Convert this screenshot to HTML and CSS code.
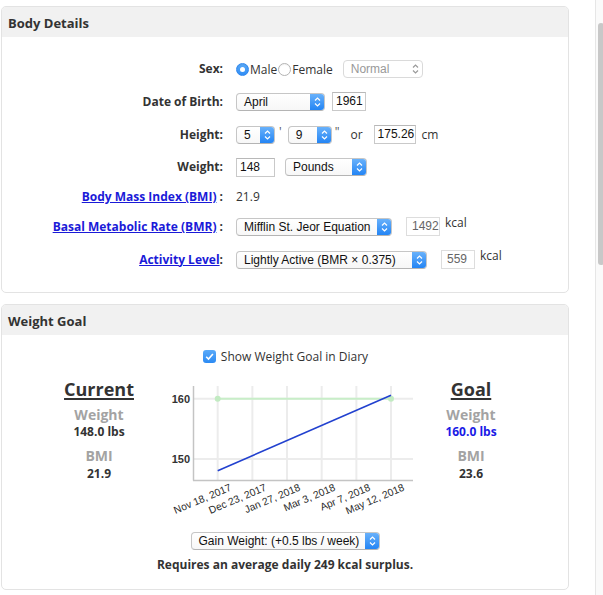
FILE: index.html
```html
<!DOCTYPE html>
<html>
<head>
<meta charset="utf-8">
<title>Body Details</title>
<link rel="stylesheet" href="styles.css">
</head>
<body>
<div class="page">
  <main class="main">
    <section class="panel">
      <h2 class="panel-head">Body Details</h2>
      <div class="form">
        <div class="label">Sex:</div>
        <div class="field">
          <span class="radio on"></span><span class="opt">Male</span>
          <span class="radio"></span><span class="opt">Female</span>
          <div class="select disabled w-normal"><span class="sel-text">Normal</span><span class="stepper"><svg width="15" height="16" viewBox="0 0 15 16"><path d="M5 6.5 L7.5 4 L10 6.5 M5 9.5 L7.5 12 L10 9.5" /></svg></span></div>
        </div>

        <div class="label">Date of Birth:</div>
        <div class="field">
          <div class="select w-month"><span class="sel-text">April</span><span class="stepper"><svg width="15" height="16" viewBox="0 0 15 16"><path d="M5 6.5 L7.5 4 L10 6.5 M5 9.5 L7.5 12 L10 9.5" /></svg></span></div>
          <span class="input w-year">1961</span>
        </div>

        <div class="label">Height:</div>
        <div class="field">
          <div class="select w-ft"><span class="sel-text">5</span><span class="stepper"><svg width="15" height="16" viewBox="0 0 15 16"><path d="M5 6.5 L7.5 4 L10 6.5 M5 9.5 L7.5 12 L10 9.5" /></svg></span></div>
          <span class="mark">'</span>
          <div class="select w-in"><span class="sel-text">9</span><span class="stepper"><svg width="15" height="16" viewBox="0 0 15 16"><path d="M5 6.5 L7.5 4 L10 6.5 M5 9.5 L7.5 12 L10 9.5" /></svg></span></div>
          <span class="mark inch">"</span>
          <span class="text or">or</span>
          <span class="input w-cm">175.26</span>
          <span class="text unit">cm</span>
        </div>

        <div class="label">Weight:</div>
        <div class="field">
          <span class="input w-weight">148</span>
          <div class="select w-pounds"><span class="sel-text">Pounds</span><span class="stepper"><svg width="15" height="16" viewBox="0 0 15 16"><path d="M5 6.5 L7.5 4 L10 6.5 M5 9.5 L7.5 12 L10 9.5" /></svg></span></div>
        </div>

        <div class="label"><a href="#" class="link">Body Mass Index (BMI)</a> :</div>
        <div class="field short"><span class="text">21.9</span></div>

        <div class="label"><a href="#" class="link">Basal Metabolic Rate (BMR)</a> :</div>
        <div class="field top">
          <div class="select w-bmr"><span class="sel-text">Mifflin St. Jeor Equation</span><span class="stepper"><svg width="15" height="16" viewBox="0 0 15 16"><path d="M5 6.5 L7.5 4 L10 6.5 M5 9.5 L7.5 12 L10 9.5" /></svg></span></div>
          <span class="input readonly w-kcal">1492</span>
          <span class="text kcal">kcal</span>
        </div>

        <div class="label"><a href="#" class="link">Activity Level</a>:</div>
        <div class="field top">
          <div class="select w-activity"><span class="sel-text">Lightly Active (BMR × 0.375)</span><span class="stepper"><svg width="15" height="16" viewBox="0 0 15 16"><path d="M5 6.5 L7.5 4 L10 6.5 M5 9.5 L7.5 12 L10 9.5" /></svg></span></div>
          <span class="input readonly w-kcal">559</span>
          <span class="text kcal">kcal</span>
        </div>
      </div>
    </section>

    <section class="panel">
      <h2 class="panel-head">Weight Goal</h2>
      <div class="goal-body">
        <label class="check-row"><span class="checkbox"><svg width="13" height="13" viewBox="0 0 13 13"><path d="M3.2 6.8 L5.5 9.1 L9.9 3.9" /></svg></span><span>Show Weight Goal in Diary</span></label>

        <div class="goal-grid">
          <div class="stat">
            <div class="stat-title">Current</div>
            <div class="stat-label">Weight</div>
            <div class="stat-value">148.0 lbs</div>
            <div class="stat-label gap">BMI</div>
            <div class="stat-value">21.9</div>
          </div>

          <svg class="chart" width="256" height="145" viewBox="0 0 256 145">
            <g class="grid">
              <line x1="29" y1="21.7" x2="249" y2="21.7"/>
              <line x1="29" y1="82" x2="249" y2="82"/>
              <line x1="53.7" y1="9" x2="53.7" y2="103"/>
              <line x1="88.4" y1="9" x2="88.4" y2="103"/>
              <line x1="123" y1="9" x2="123" y2="103"/>
              <line x1="157.7" y1="9" x2="157.7" y2="103"/>
              <line x1="192.4" y1="9" x2="192.4" y2="103"/>
              <line x1="227" y1="9" x2="227" y2="103"/>
            </g>
            <g class="axis">
              <line x1="29.5" y1="9" x2="29.5" y2="103.5"/>
              <line x1="29" y1="103.5" x2="249" y2="103.5"/>
            </g>
            <text class="ytick" x="26" y="25.5">160</text>
            <text class="ytick" x="26" y="85.8">150</text>
            <line class="goal-line" x1="53.7" y1="21.7" x2="227" y2="21.7"/>
            <circle class="goal-dot" cx="53.7" cy="21.7" r="3"/>
            <circle class="goal-dot" cx="227" cy="21.7" r="3"/>
            <line class="trend" x1="53.7" y1="93.7" x2="227" y2="18.3"/>
            <text class="xtick" transform="translate(68 113) rotate(-23)">Nov 18, 2017</text>
            <text class="xtick" transform="translate(103 113) rotate(-23)">Dec 23, 2017</text>
            <text class="xtick" transform="translate(137 113) rotate(-23)">Jan 27, 2018</text>
            <text class="xtick" transform="translate(172 113) rotate(-23)">Mar 3, 2018</text>
            <text class="xtick" transform="translate(207 113) rotate(-23)">Apr 7, 2018</text>
            <text class="xtick" transform="translate(241 113) rotate(-23)">May 12, 2018</text>
          </svg>

          <div class="stat">
            <div class="stat-title">Goal</div>
            <div class="stat-label">Weight</div>
            <div class="stat-value blue">160.0 lbs</div>
            <div class="stat-label gap">BMI</div>
            <div class="stat-value">23.6</div>
          </div>
        </div>

        <div class="rate-row">
          <div class="select w-rate"><span class="sel-text">Gain Weight: (+0.5 lbs / week)</span><span class="stepper"><svg width="15" height="16" viewBox="0 0 15 16"><path d="M5 6.5 L7.5 4 L10 6.5 M5 9.5 L7.5 12 L10 9.5" /></svg></span></div>
        </div>
        <p class="summary">Requires an average daily 249 kcal surplus.</p>
      </div>
    </section>
  </main>
  <div class="scrollbar"><div class="thumb"></div></div>
</div>
</body>
</html>
```

FILE: styles.css
```css
* { box-sizing: border-box; }

html, body {
  margin: 0;
  padding: 0;
  background: #ffffff;
}

body {
  font-family: "Open Sans", "Liberation Sans", sans-serif;
  font-size: 12px;
  color: #333333;
}

.page {
  display: flex;
  justify-content: space-between;
  height: 595px;
  overflow: hidden;
}

.main {
  width: 568px;
  margin-left: 1px;
  padding-top: 6px;
}

.panel {
  border: 1px solid #e3e3e3;
  border-radius: 5px;
  background: #ffffff;
  margin-bottom: 11px;
}

.panel-head {
  margin: 0;
  height: 30px;
  line-height: 32px;
  padding-left: 6px;
  background: #f1f1f1;
  border-radius: 4px 4px 0 0;
  font-size: 13px;
  font-weight: 700;
  color: #333333;
}

/* ---------- form ---------- */
.form {
  display: grid;
  grid-template-columns: 221px 1fr;
  grid-template-rows: 20px 20px 20px 20px 14px 20px 20px;
  column-gap: 13px;
  row-gap: 12.75px;
  padding: 22px 0 22px;
}

.label {
  text-align: right;
  font-weight: 700;
  font-size: 12px;
  line-height: 20px;
  color: #333333;
  white-space: nowrap;
  align-self: center;
}

.link {
  color: #1a1ad8;
  text-decoration: underline;
}

.field {
  display: flex;
  align-items: center;
  height: 20px;
}

.field.short { height: 14px; }
.field.top { align-items: flex-start; }
.field.top .select { margin-top: 1px; }

.text {
  font-size: 12px;
  line-height: 20px;
  color: #333333;
}

.opt {
  font-size: 12px;
  color: #333333;
  margin-left: 1px;
  margin-right: 1px;
}

.radio {
  width: 13px;
  height: 13px;
  border-radius: 50%;
  border: 1px solid #b3b3b3;
  background: #ffffff;
  display: inline-block;
  position: relative;
  box-shadow: inset 0 1px 1px rgba(0,0,0,0.05);
}

.radio.on {
  background: linear-gradient(#5aaaf9, #2f8df5);
  border-color: #2f87ee;
}

.radio.on::after {
  content: "";
  position: absolute;
  width: 5px;
  height: 5px;
  border-radius: 50%;
  background: #ffffff;
  left: 3px;
  top: 3px;
}

/* select look-alike */
.select {
  display: inline-flex;
  align-items: center;
  justify-content: space-between;
  height: 18px;
  border: 1px solid #c6c6c6;
  border-bottom-color: #b4b4b4;
  border-radius: 4px;
  background: linear-gradient(#ffffff, #f7f7f7);
  font-family: "Liberation Sans", Arial, sans-serif;
  font-size: 12px;
  color: #111111;
  overflow: hidden;
  flex: none;
}

.sel-text {
  padding-left: 7px;
  white-space: nowrap;
  line-height: 16px;
}

.stepper {
  width: 15px;
  height: 18px;
  margin: -1px -1px -1px 0;
  border-radius: 0 4px 4px 0;
  background: linear-gradient(#6db4fb, #1f82f4);
  display: flex;
  align-items: center;
  justify-content: center;
}

.stepper svg path {
  fill: none;
  stroke: #ffffff;
  stroke-width: 1.2;
}

.select.disabled {
  color: #999999;
  border-color: #dadada;
  background: #ffffff;
}

.select.disabled .stepper { background: none; }
.select.disabled .stepper svg path { stroke: #9a9a9a; }

.w-normal { width: 80px; margin-left: 9px; }
.w-month { width: 89px; }
.w-ft { width: 39px; }
.w-in { width: 44px; }
.w-pounds { width: 82px; margin-left: 10px; }
.w-bmr { width: 156px; }
.w-activity { width: 191px; }
.w-rate { width: 189px; }

/* inputs */
.input {
  display: inline-block;
  height: 19px;
  border: 1px solid #c9c9c9;
  border-top-color: #b8b8b8;
  background: #ffffff;
  font-family: "Liberation Sans", Arial, sans-serif;
  font-size: 12px;
  line-height: 17px;
  padding-left: 3px;
  color: #111111;
  flex: none;
}

.input.readonly {
  color: #666666;
  border-color: #dddddd;
  padding-left: 5px;
}

.w-year { width: 34px; margin-left: 7px; }
.w-cm { width: 42px; margin-left: 11px; }
.w-weight { width: 39px; }
.w-kcal { width: 34px; margin-left: 14px; }

.mark {
  font-size: 12px;
  color: #555555;
  margin: 0 6px 0 4px;
  line-height: 20px;
  position: relative;
  top: -3px;
}

.mark.inch { margin: 0 0 0 3px; }
.or { margin-left: 11px; }
.unit { margin-left: 6px; }

.kcal {
  margin-left: 5px;
  line-height: 12px;
}

/* ---------- weight goal ---------- */
.goal-body {
  padding: 13px 0 16px;
}

.check-row {
  display: flex;
  align-items: center;
  justify-content: center;
  height: 17px;
  font-size: 12px;
  color: #333333;
  gap: 5px;
  margin-left: 1px;
}

.checkbox {
  width: 13px;
  height: 13px;
  border-radius: 3px;
  background: linear-gradient(#5aaaf9, #2c8af3);
  display: inline-flex;
}

.checkbox svg path {
  fill: none;
  stroke: #ffffff;
  stroke-width: 1.6;
}

.goal-grid {
  display: grid;
  grid-template-columns: 130px 256px 102px;
  padding-left: 32px;
  margin-top: 12px;
}

.stat {
  text-align: center;
}

.stat-title {
  font-size: 18px;
  font-weight: 700;
  line-height: 24px;
  text-decoration: underline;
  text-decoration-thickness: 1.5px;
  text-underline-offset: 2px;
  color: #333333;
}

.stat-label {
  font-size: 14px;
  font-weight: 700;
  color: #a3a3a3;
  line-height: 16px;
  margin-top: 6px;
}

.stat-label.gap { margin-top: 8px; }

.stat-value {
  font-size: 12px;
  font-weight: 700;
  line-height: 17px;
  color: #333333;
}

.stat-label.gap + .stat-value { padding-top: 1px; }

.stat-value.blue { color: #1a1ae6; }

.chart { display: block; }

.chart .grid line {
  stroke: #ececec;
  stroke-width: 2;
}

.chart .axis line {
  stroke: #c4c4c4;
  stroke-width: 1.5;
}

.chart .ytick {
  font-family: "Liberation Sans", Arial, sans-serif;
  font-size: 11px;
  font-weight: 700;
  fill: #333333;
  text-anchor: end;
}

.chart .xtick {
  font-family: "Liberation Sans", Arial, sans-serif;
  font-size: 10.3px;
  fill: #2a2a2a;
  text-anchor: end;
}

.chart .goal-line {
  stroke: #c8eec8;
  stroke-width: 2;
}

.chart .goal-dot { fill: #c2ebc2; }

.chart .trend {
  stroke: #2241cf;
  stroke-width: 1.6;
}

.rate-row {
  display: flex;
  justify-content: center;
  margin-top: 10px;
}

.summary {
  margin: 7px 0 0;
  text-align: center;
  font-size: 12px;
  font-weight: 700;
  line-height: 16px;
  color: #333333;
}

/* scrollbar strip at right edge */
.scrollbar {
  width: 8px;
  height: 595px;
  border-left: 1px solid #e6e6e6;
  background: #fafafa;
  flex: none;
}

.thumb {
  margin-top: 23px;
  margin-left: 2px;
  width: 6px;
  height: 242px;
  border-radius: 3px;
  background: #c8c8c8;
}
```
